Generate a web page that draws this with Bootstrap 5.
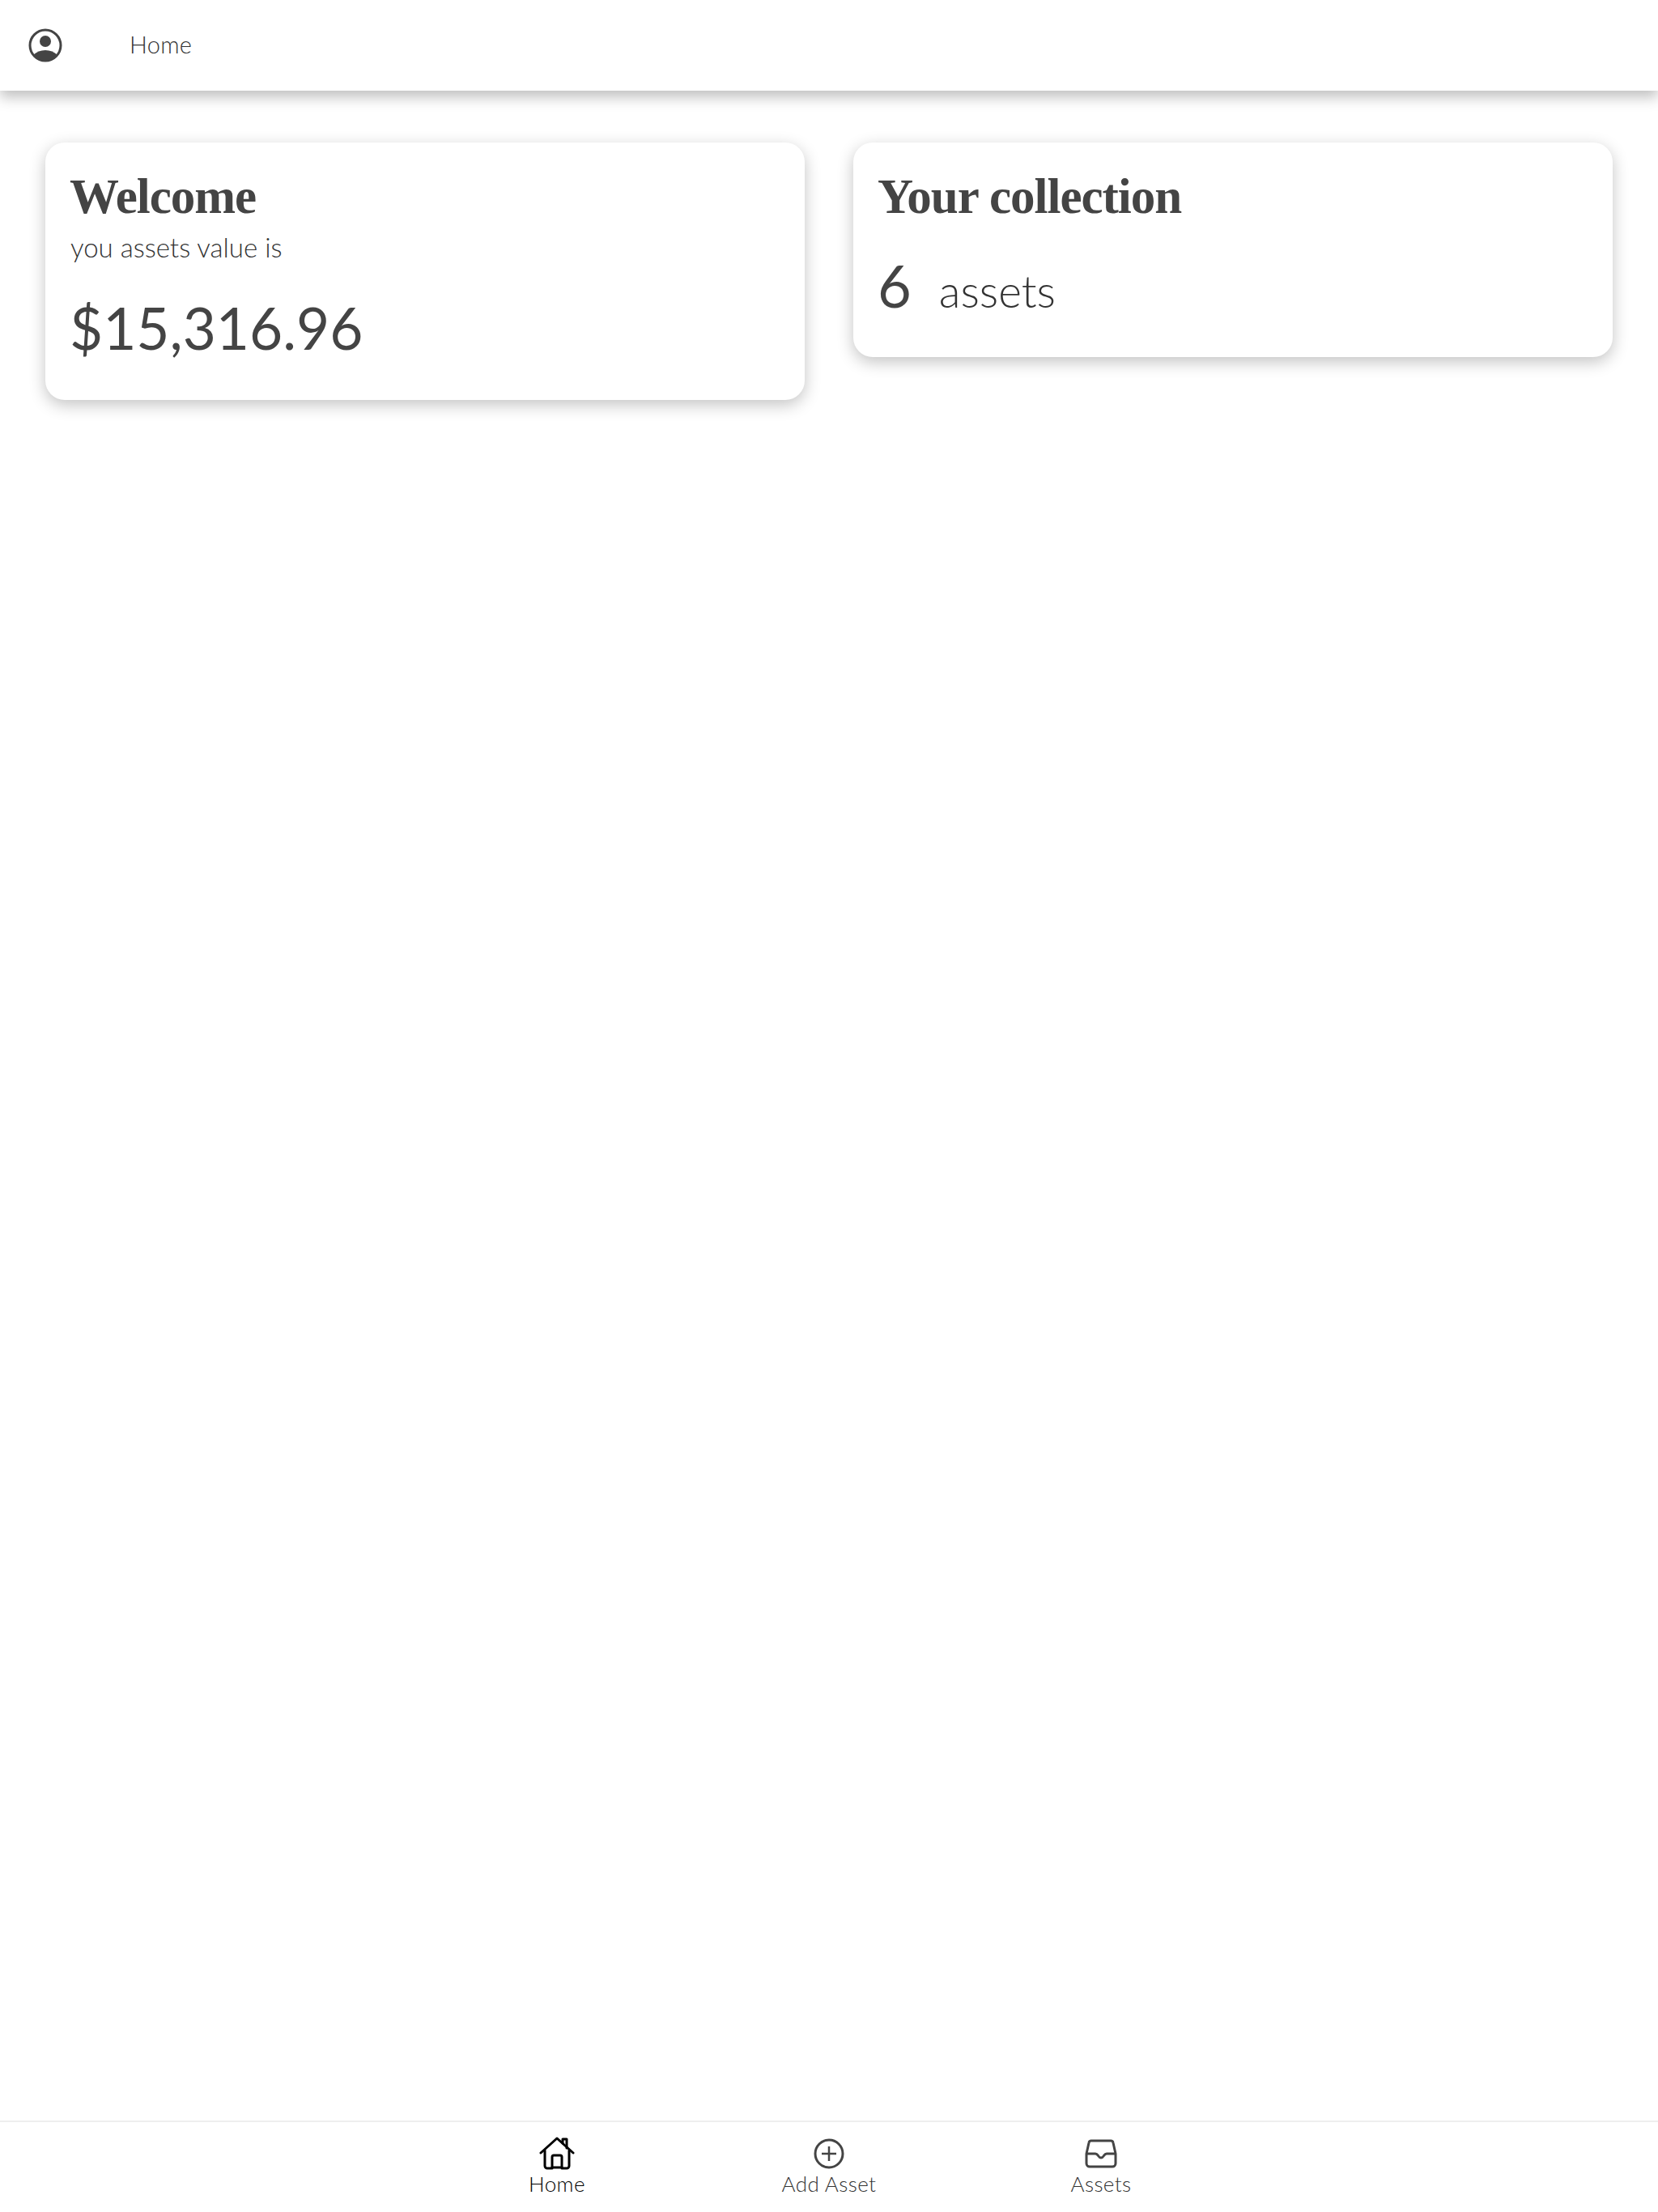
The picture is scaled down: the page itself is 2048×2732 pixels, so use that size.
<!DOCTYPE html>
<html lang="en">

<head>
    <meta charset="UTF-8">
    <meta name="viewport" content="width=device-width, initial-scale=1.0">
    <title>Home</title>
    <link rel="stylesheet" href="https://cdn.jsdelivr.net/npm/bootstrap@5.3.3/dist/css/bootstrap.min.css">
    <style>
        body {
            font-family: "Lato", "Liberation Sans", sans-serif;
            color: #444;
            background: #fff;
        }

        .app-shell {
            height: 2732px;
        }

        .top-bar {
            height: 112px;
            padding-left: 35px;
            box-shadow: 0 8px 16px rgba(0, 0, 0, .25);
            z-index: 2;
        }

        .top-bar-title {
            margin-left: 83px;
            margin-bottom: 2px;
            font-size: 29px;
            font-weight: 300;
            letter-spacing: .3px;
            color: #333;
        }

        .page-body {
            padding: 64px 56px 0;
        }

        .asset-row {
            --bs-gutter-x: 60px;
        }

        .asset-card {
            border: 0;
            border-radius: 24px;
            padding: 32px 30px;
            box-shadow: 0 6px 20px rgba(0, 0, 0, .24);
            color: #444;
        }

        .card-heading {
            font-family: "Liberation Serif", serif;
            font-size: 61px;
            font-weight: 700;
            line-height: 70px;
            margin: 0;
            letter-spacing: -1px;
        }

        .card-sub {
            font-size: 33px;
            font-weight: 300;
            line-height: 42px;
            margin-top: 6px;
            padding-left: 1px;
            color: #333;
        }

        .card-value {
            font-size: 71px;
            line-height: 90px;
            margin-top: 34px;
            margin-bottom: 12px;
        }

        .count-line {
            margin-top: 29px;
            margin-bottom: 5px;
            line-height: 90px;
        }

        .count-num {
            font-size: 72px;
        }

        .count-label {
            font-size: 55px;
            font-weight: 300;
            margin-left: 34px;
            color: #333;
        }

        .tab-bar {
            height: 113px;
            border-top: 2px solid #eee;
        }

        .tab-item {
            width: 336px;
            padding-top: 18px;
            color: #333;
            font-size: 26px;
            font-weight: 300;
            line-height: 32px;
            letter-spacing: .4px;
            text-decoration: none;
        }

        .tab-item.active-tab {
            color: #000;
        }
    </style>
</head>

<body>
    <div class="app-shell d-flex flex-column">
        <header class="top-bar bg-white d-flex align-items-center position-relative">
            <svg width="42" height="42" viewBox="0 0 42 42">
                <circle cx="21" cy="21" r="19" fill="none" stroke="#444" stroke-width="3"/>
                <circle cx="21" cy="16" r="7" fill="#444"/>
                <path d="M6 33c4-4 9-6 15-6s11 2 15 6c-3.500 4.500-9 7-15 7s-11.500-2.500-15-7z" fill="#444"/>
            </svg>
            <div class="top-bar-title">Home</div>
        </header>

        <main class="page-body flex-grow-1">
            <div class="row asset-row align-items-start">
                <div class="col-6">
                    <div class="card asset-card">
                        <h2 class="card-heading">Welcome</h2>
                        <div class="card-sub">you assets value is</div>
                        <div class="card-value">$15,316.96</div>
                    </div>
                </div>
                <div class="col-6">
                    <div class="card asset-card">
                        <h2 class="card-heading">Your collection</h2>
                        <div class="count-line d-flex align-items-baseline">
                            <span class="count-num">6</span><span class="count-label">assets</span>
                        </div>
                    </div>
                </div>
            </div>
        </main>

        <nav class="tab-bar d-flex justify-content-center bg-white">
            <a href="#" class="tab-item active-tab d-flex flex-column align-items-center">
                <svg width="44" height="42" viewBox="0 0 44 42" fill="none" stroke="#000" stroke-width="3" stroke-linejoin="round" stroke-linecap="round">
                    <path d="M2 20 22 2l20 18"/>
                    <path d="M29 8V3h5v11"/>
                    <path d="M7 17v19a3 3 0 0 0 3 3h6V25a2 2 0 0 1 2-2h8a2 2 0 0 1 2 2v14h6a3 3 0 0 0 3-3V17"/>
                    <path d="M16 38h12"/>
                </svg>
                <span>Home</span>
            </a>
            <a href="#" class="tab-item d-flex flex-column align-items-center">
                <svg width="38" height="42" viewBox="0 0 38 42" fill="none" stroke="#444" stroke-width="3">
                    <circle cx="19" cy="21" r="17"/>
                    <path d="M19 12v18M10 21h18" stroke-width="2.500"/>
                </svg>
                <span>Add Asset</span>
            </a>
            <a href="#" class="tab-item d-flex flex-column align-items-center">
                <svg width="42" height="42" viewBox="0 0 42 42" fill="none" stroke="#444" stroke-width="3" stroke-linejoin="round">
                    <path d="M9 5h24a3 3 0 0 1 3 2.500L39 21v12a4 4 0 0 1-4 4H7a4 4 0 0 1-4-4V21L6 7.500A3 3 0 0 1 9 5z"/>
                    <path d="M3 21h11c2 0 2.500 1 3.500 2.500 1 1.500 2 2.500 3.500 2.500s2.500-1 3.500-2.500c1-1.500 1.500-2.500 3.500-2.500h11"/>
                </svg>
                <span>Assets</span>
            </a>
        </nav>
    </div>

    <script src="https://cdn.jsdelivr.net/npm/bootstrap@5.3.3/dist/js/bootstrap.bundle.min.js"></script>
</body>

</html>
